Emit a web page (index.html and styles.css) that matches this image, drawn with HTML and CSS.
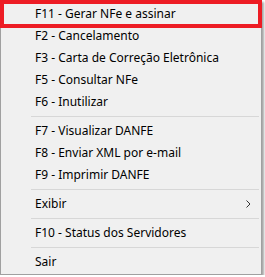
FILE: index.html
```html
<!DOCTYPE html>
<html>
<head>
<meta charset="utf-8">
<link rel="stylesheet" href="styles.css">
</head>
<body>
<div class="menu">
  <div class="item">F11 - Gerar NFe e assinar</div>
  <div class="item">F2 - Cancelamento</div>
  <div class="item">F3 - Carta de Correção Eletrônica</div>
  <div class="item">F5 - Consultar NFe</div>
  <div class="item">F6 - Inutilizar</div>
  <div class="sep"></div>
  <div class="item">F7 - Visualizar DANFE</div>
  <div class="item">F8 - Enviar XML por e-mail</div>
  <div class="item">F9 - Imprimir DANFE</div>
  <div class="sep"></div>
  <div class="item sub"><span>Exibir</span><svg class="chev" width="5" height="8" viewBox="0 0 5 8"><path d="M0.5 0.5 L4 4 L0.5 7.5" fill="none" stroke="#333" stroke-width="1"/></svg></div>
  <div class="sep"></div>
  <div class="item">F10 - Status dos Servidores</div>
  <div class="sep"></div>
  <div class="item">Sair</div>
  <div class="mark"></div>
</div>
</body>
</html>
```
FILE: styles.css
```css
html, body {
  margin: 0;
  padding: 0;
  background: #ffffff;
}
.menu {
  position: relative;
  box-sizing: border-box;
  width: 262px;
  border: 1px solid #a0a0a0;
  background: #f0f0f0;
  padding: 2px 2px 1px 2px;
  box-shadow: 2px 2px 2px rgba(0, 0, 0, 0.35);
  font-family: "Noto Sans", "Open Sans", sans-serif;
  font-size: 12px;
  color: #000;
}
.item {
  height: 22px;
  line-height: 22px;
  padding-left: 32px;
  padding-right: 8px;
  white-space: nowrap;
}
.sub {
  display: flex;
  justify-content: space-between;
  align-items: center;
}
.chev {
  display: block;
}
.sep {
  height: 7px;
  margin-left: 28px;
  box-sizing: border-box;
  padding-top: 3px;
}
.sep::after {
  content: "";
  display: block;
  height: 1px;
  background: #d7d7d7;
}
.mark {
  position: absolute;
  top: -1px;
  left: -1px;
  width: 262px;
  height: 28px;
  box-sizing: border-box;
  border: 4px solid #ed1c24;
}
```
